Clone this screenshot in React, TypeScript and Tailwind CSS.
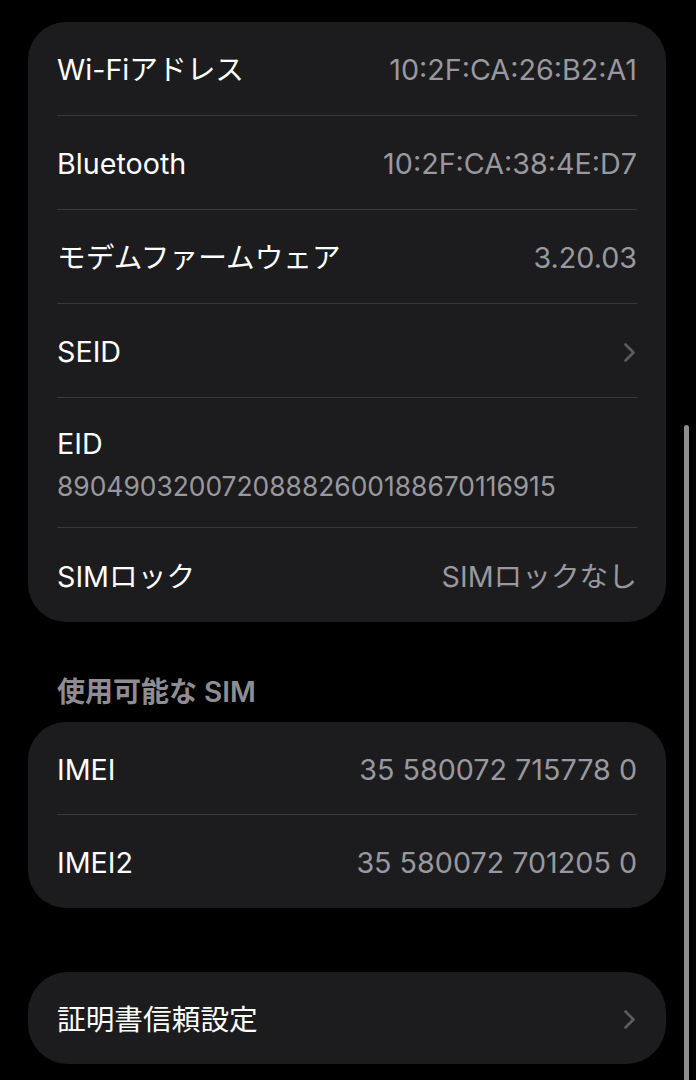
import React from 'react';

const FONT = "font-['Inter','Noto_Sans_CJK_JP',sans-serif]";

const Chevron = () => (
  <svg width="13" height="21" viewBox="0 0 13 21" fill="none">
    <path d="M2.5 2.5 L10.5 10.5 L2.5 18.5" stroke="#5c5c60" strokeWidth="2.6" strokeLinecap="round" strokeLinejoin="round" />
  </svg>
);

interface RowProps {
  label: string;
  value?: string;
  chevron?: boolean;
  last?: boolean;
  h?: string;
}

const Row: React.FC<RowProps> = ({ label, value, chevron, last, h = 'h-[94px]' }) => (
  <div className={`flex ${h} items-center justify-between pt-[3px] ${last ? '' : 'border-b border-[#38383a]'}`}>
    <span className="text-[28.7px] leading-[32px] text-white">{label}</span>
    {value && <span className="text-[28.7px] leading-[32px] text-[#98989e]">{value}</span>}
    {chevron && <span className="mr-[1px]"><Chevron /></span>}
  </div>
);

export default function App() {
  return (
    <div className={`relative min-h-[1080px] overflow-hidden bg-black pl-[28px] pr-[30px] pt-[22px] ${FONT}`}>
      {/* カード1: デバイス情報 */}
      <div className="rounded-[38px] bg-[#1c1c1e] px-[29px]">
        <Row label="Wi-Fiアドレス" value="10:2F:CA:26:B2:A1" />
        <Row label="Bluetooth" value="10:2F:CA:38:4E:D7" />
        <Row label="モデムファームウェア" value="3.20.03" />
        <Row label="SEID" chevron />
        <div className="h-[130px] border-b border-[#38383a] pt-[30px]">
          <div className="text-[28.7px] leading-[32px] text-white">EID</div>
          <div className="mt-[10px] text-[26.4px] leading-[32px] text-[#98989e]">89049032007208882600188670116915</div>
        </div>
        <Row label="SIMロック" value="SIMロックなし" last />
      </div>

      {/* セクション見出し */}
      <div className="flex h-[100px] items-end pb-[14px] pl-[29px]">
        <span className="text-[28px] font-semibold leading-[32px] text-[#8d8d93]">使用可能な SIM</span>
      </div>

      <div className="rounded-[38px] bg-[#1c1c1e] px-[29px]">
        <Row label="IMEI" value="35 580072 715778 0" h="h-[93px]" />
        <Row label="IMEI2" value="35 580072 701205 0" h="h-[93px]" last />
      </div>

      <div className="mt-[64px] rounded-[40px] bg-[#1c1c1e] px-[29px]">
        <Row label="証明書信頼設定" chevron h="h-[92px]" last />
      </div>

      {/* スクロールバー */}
      <div className="absolute right-[7px] top-[425px] h-[700px] w-[5px] rounded-full bg-[#8c8c90]" />
    </div>
  );
}
